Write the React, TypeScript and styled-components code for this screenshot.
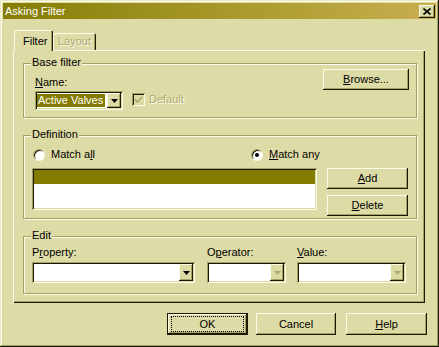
import React from "react";
import styled, { createGlobalStyle, css } from "styled-components";

const face = "#dedca6";
const light = "#fcfbea";
const shadow = "#a5a163";
const dark = "#1a1a00";
const olive = "#847c00";
const greyText = "#aeaa70";

const GlobalStyle = createGlobalStyle`
  body {
    margin: 0;
    font-family: "Liberation Sans", Arial, sans-serif;
    font-size: 11px;
    line-height: 13px;
    color: #000;
  }
`;

const raised = css`
  box-shadow: inset -1px -1px 0 ${dark}, inset 1px 1px 0 ${light},
    inset -2px -2px 0 ${shadow};
`;

const sunken = css`
  box-shadow: inset 1px 1px 0 ${shadow}, inset -1px -1px 0 ${light},
    inset 2px 2px 0 ${dark}, inset -2px -2px 0 ${face};
`;

const Window = styled.div`
  width: 439px;
  height: 347px;
  box-sizing: border-box;
  padding: 3px;
  background: ${face};
  box-shadow: inset -1px -1px 0 ${dark}, inset 1px 1px 0 #eceac4,
    inset -2px -2px 0 ${shadow}, inset 2px 2px 0 ${light};
  display: flex;
  flex-direction: column;
`;

const TitleBar = styled.div`
  height: 16px;
  display: flex;
  align-items: center;
  justify-content: space-between;
  background: linear-gradient(to right, #857d06, #a99b2c 55%, #c9ae50);
`;

const Title = styled.span`
  color: #fff;
  padding-left: 2px;
`;

const CloseBtn = styled.div`
  width: 16px;
  height: 13px;
  margin-right: 1px;
  background: ${face};
  ${raised};
  display: flex;
  align-items: center;
  justify-content: center;
`;

const Body = styled.div`
  padding-left: 10px;
  display: flex;
  flex-direction: column;
`;

const TabRow = styled.div`
  margin-top: 11px;
  padding-left: 1px;
  display: flex;
  align-items: flex-end;
`;

const Tab = styled.div<{ $active?: boolean; $w: number; $pl: number }>`
  position: relative;
  z-index: 1;
  width: ${(p) => p.$w}px;
  box-sizing: border-box;
  height: ${(p) => (p.$active ? 21 : 17)}px;
  margin-bottom: ${(p) => (p.$active ? -1 : 0)}px;
  padding: ${(p) => (p.$active ? 5 : 2)}px 0 0 ${(p) => p.$pl}px;
  background: ${face};
  border-radius: 2px 2px 0 0;
  box-shadow: inset 1px 1px 0 ${light}, inset -1px 0 0 ${dark},
    inset -2px 0 0 ${shadow};
  color: ${(p) => (p.$active ? "#000" : greyText)};
  text-shadow: ${(p) => (p.$active ? "none" : `1px 1px 0 ${light}`)};
`;

const Panel = styled.div`
  width: 412px;
  height: 253px;
  box-sizing: border-box;
  padding: 13px 0 0 10px;
  box-shadow: inset 1px 1px 0 ${light}, inset -1px -1px 0 ${dark},
    inset -2px -2px 0 ${shadow};
  display: flex;
  flex-direction: column;
  gap: 17px;
`;

const Group = styled.div<{ $h: number }>`
  position: relative;
  width: 394px;
  height: ${(p) => p.$h}px;
  box-sizing: border-box;
  border: 1px solid ${shadow};
  box-shadow: inset 1px 1px 0 ${light}, 1px 1px 0 ${light};
`;

const Legend = styled.span`
  position: absolute;
  top: -8px;
  left: 7px;
  padding: 0 1px;
  background: ${face};
`;

const BaseRow = styled.div`
  display: flex;
  justify-content: space-between;
  align-items: flex-start;
`;

const NameCol = styled.div`
  margin: 12px 0 0 11px;
  display: flex;
  flex-direction: column;
  gap: 2px;
`;

const InlineRow = styled.div`
  display: flex;
  align-items: flex-start;
`;

const Combo = styled.div<{ $w: number; $h: number }>`
  width: ${(p) => p.$w}px;
  height: ${(p) => p.$h}px;
  box-sizing: border-box;
  padding: 2px;
  background: #fff;
  ${sunken};
  display: flex;
`;

const ComboText = styled.div<{ $selected?: boolean }>`
  flex: 1;
  padding-left: 1px;
  margin: 1px 2px 1px 0;
  color: ${(p) => (p.$selected ? "#fff" : "#000")};
  background: ${(p) => (p.$selected ? olive : "transparent")};
  line-height: 13px;
  white-space: nowrap;
  overflow: hidden;
`;

const DropBtn = styled.div<{ $disabled?: boolean }>`
  width: 14px;
  background: ${face};
  ${raised};
  display: flex;
  align-items: center;
  justify-content: center;
  color: ${(p) => (p.$disabled ? greyText : "#000")};
`;

const CheckBox = styled.div`
  width: 13px;
  height: 13px;
  margin: 2px 0 0 9px;
  box-sizing: border-box;
  background: ${face};
  ${sunken};
  display: flex;
  align-items: center;
  justify-content: center;
`;

const Disabled = styled.span<{ $ml?: number }>`
  margin-left: ${(p) => p.$ml ?? 0}px;
  margin-top: 2px;
  color: ${greyText};
  text-shadow: 1px 1px 0 ${light};
`;

const Button = styled.div<{ $w: number; $h?: number; $ml?: number; $default?: boolean }>`
  width: ${(p) => p.$w}px;
  height: ${(p) => p.$h ?? 21}px;
  margin-left: ${(p) => p.$ml ?? 0}px;
  box-sizing: border-box;
  background: ${face};
  display: flex;
  align-items: center;
  justify-content: center;
  ${(p) =>
    p.$default
      ? css`
          box-shadow: inset 0 0 0 1px ${dark}, inset -2px -2px 0 ${dark},
            inset 2px 2px 0 ${light}, inset -3px -3px 0 ${shadow};
        `
      : raised}
`;

const BrowseButton = styled(Button)`
  margin: 5px 7px 0 0;
`;

const FocusRect = styled.span`
  width: 71px;
  height: 14px;
  border: 1px dotted #000;
  display: flex;
  align-items: center;
  justify-content: center;
`;

const RadioRow = styled.div`
  margin: 12px 0 0 9px;
  display: flex;
  height: 13px;
`;

const RadioItem = styled.div<{ $w?: number }>`
  width: ${(p) => (p.$w ? `${p.$w}px` : "auto")};
  display: flex;
  align-items: center;
  gap: 6px;
`;

const RadioCircle = styled.div<{ $checked?: boolean }>`
  width: 12px;
  height: 12px;
  box-sizing: border-box;
  border-radius: 50%;
  background: #fff;
  border: 1px solid;
  border-color: ${shadow} ${light} ${light} ${shadow};
  box-shadow: inset 1px 1px 0 ${dark};
  display: flex;
  align-items: center;
  justify-content: center;
  &::after {
    content: "";
    width: 4px;
    height: 4px;
    border-radius: 50%;
    background: ${(p) => (p.$checked ? "#000" : "transparent")};
  }
`;

const ListRow = styled.div`
  margin: 7px 0 0 8px;
  display: flex;
  gap: 10px;
`;

const ListBox = styled.div`
  width: 285px;
  height: 42px;
  box-sizing: border-box;
  padding: 2px;
  background: #fff;
  ${sunken};
`;

const ListItem = styled.div<{ $selected?: boolean }>`
  height: 14px;
  background: ${(p) => (p.$selected ? olive : "transparent")};
`;

const ButtonCol = styled.div`
  display: flex;
  flex-direction: column;
  gap: 6px;
`;

const FieldRow = styled.div`
  margin: 9px 0 0 8px;
  display: flex;
`;

const Field = styled.div<{ $ml?: number }>`
  margin-left: ${(p) => p.$ml ?? 0}px;
  display: flex;
  flex-direction: column;
  gap: 3px;
`;

const Footer = styled.div`
  margin-top: 10px;
  padding-left: 154px;
  display: flex;
`;

const Arrow = () => (
  <svg width="7" height="4" viewBox="0 0 7 4">
    <path d="M0 0h7L3.5 4z" fill="currentColor" />
  </svg>
);

const Check = () => (
  <svg width="9" height="8" viewBox="0 0 9 8">
    <path
      d="M1 3.5l2.5 2.5L8 1"
      fill="none"
      stroke={greyText}
      strokeWidth="1.8"
    />
  </svg>
);

export default function App() {
  return (
    <>
      <GlobalStyle />
      <Window>
        <TitleBar>
          <Title>Asking Filter</Title>
          <CloseBtn>
            <svg width="8" height="7" viewBox="0 0 8 7">
              <path d="M0.5 0.5l7 6M7.5 0.5l-7 6" stroke="#000" strokeWidth="1.6" />
            </svg>
          </CloseBtn>
        </TitleBar>
        <Body>
          <TabRow>
            <Tab $active $w={39} $pl={9}>
              Filter
            </Tab>
            <Tab $w={43} $pl={5}>
              Layout
            </Tab>
          </TabRow>
          <Panel>
            <Group $h={55}>
              <Legend>Base filter</Legend>
              <BaseRow>
                <NameCol>
                  <span>
                    <u>N</u>ame:
                  </span>
                  <InlineRow>
                    <Combo $w={88} $h={19}>
                      <ComboText $selected>Active Valves</ComboText>
                      <DropBtn>
                        <Arrow />
                      </DropBtn>
                    </Combo>
                    <CheckBox>
                      <Check />
                    </CheckBox>
                    <Disabled $ml={4}>Default</Disabled>
                  </InlineRow>
                </NameCol>
                <BrowseButton $w={86}>
                  <span>
                    <u>B</u>rowse...
                  </span>
                </BrowseButton>
              </BaseRow>
            </Group>

            <Group $h={84}>
              <Legend>Definition</Legend>
              <RadioRow>
                <RadioItem $w={218}>
                  <RadioCircle />
                  <span>
                    Match a<u>l</u>l
                  </span>
                </RadioItem>
                <RadioItem>
                  <RadioCircle $checked />
                  <span>
                    <u>M</u>atch any
                  </span>
                </RadioItem>
              </RadioRow>
              <ListRow>
                <ListBox>
                  <ListItem $selected />
                </ListBox>
                <ButtonCol>
                  <Button $w={81}>
                    <span>
                      <u>A</u>dd
                    </span>
                  </Button>
                  <Button $w={81}>
                    <span>
                      <u>D</u>elete
                    </span>
                  </Button>
                </ButtonCol>
              </ListRow>
            </Group>

            <Group $h={58}>
              <Legend>Edit</Legend>
              <FieldRow>
                <Field>
                  <span>
                    P<u>r</u>operty:
                  </span>
                  <Combo $w={163} $h={21}>
                    <ComboText />
                    <DropBtn>
                      <Arrow />
                    </DropBtn>
                  </Combo>
                </Field>
                <Field $ml={12}>
                  <span>
                    O<u>p</u>erator:
                  </span>
                  <Combo $w={79} $h={21}>
                    <ComboText />
                    <DropBtn $disabled>
                      <Arrow />
                    </DropBtn>
                  </Combo>
                </Field>
                <Field $ml={11}>
                  <span>
                    <u>V</u>alue:
                  </span>
                  <Combo $w={109} $h={21}>
                    <ComboText />
                    <DropBtn $disabled>
                      <Arrow />
                    </DropBtn>
                  </Combo>
                </Field>
              </FieldRow>
            </Group>
          </Panel>
          <Footer>
            <Button $w={81} $h={22} $default>
              <FocusRect>OK</FocusRect>
            </Button>
            <Button $w={80} $h={22} $ml={8}>
              Cancel
            </Button>
            <Button $w={81} $h={22} $ml={10}>
              <span>
                <u>H</u>elp
              </span>
            </Button>
          </Footer>
        </Body>
      </Window>
    </>
  );
}
